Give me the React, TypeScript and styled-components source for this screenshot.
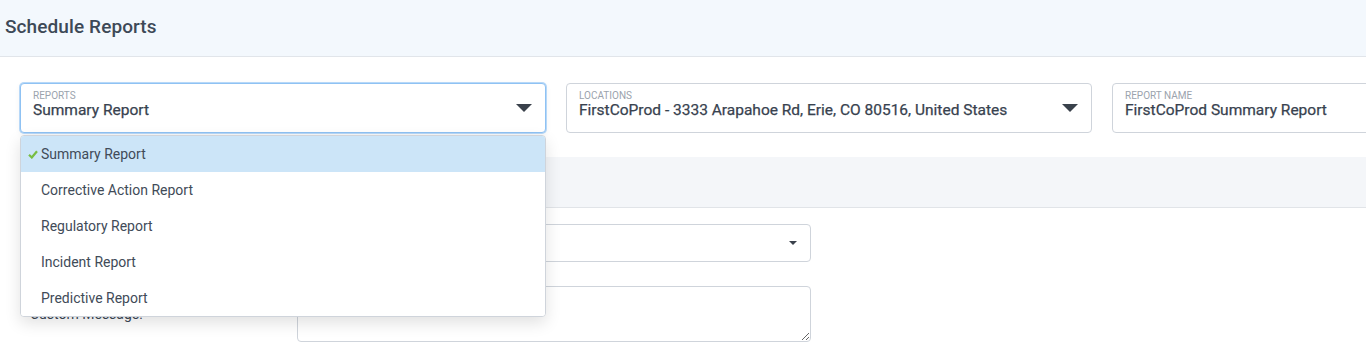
import React from "react";
import styled, { createGlobalStyle, css } from "styled-components";

const GlobalStyle = createGlobalStyle`
  html, body {
    margin: 0;
    padding: 0;
    background: #fff;
    font-family: Roboto, "Liberation Sans", sans-serif;
    color: #3b4756;
    overflow: hidden;
  }
`;

const Page = styled.div`
  width: 1366px;
  height: 354px;
  overflow: hidden;
  position: relative;
`;

const Header = styled.div`
  box-sizing: border-box;
  height: 57px;
  background: #f3f8fd;
  border-bottom: 1px solid #e1e5ea;
  display: flex;
  align-items: center;
  padding: 0 0 4px 5px;
`;

const Title = styled.h1`
  margin: 0;
  font-size: 19px;
  font-weight: 500;
  color: #3d4957;
  letter-spacing: 0.1px;
`;

const Body = styled.div`
  padding: 26px 0 0 20px;
`;

const FieldRow = styled.div`
  display: flex;
  gap: 20px;
  width: 1640px;
`;

const FieldWrap = styled.div`
  position: relative;
  width: 526px;
  flex-shrink: 0;
`;

const Field = styled.div<{ $focused?: boolean }>`
  box-sizing: border-box;
  height: 50px;
  border: 1px solid #cfd4db;
  border-radius: 4px;
  background: #fff;
  display: flex;
  align-items: center;
  justify-content: space-between;
  padding: 0 13px 7px 12px;
  ${(p) =>
    p.$focused &&
    css`
      border-color: #8fc2f3;
      box-shadow: 0 0 0 1px #b7d8f8, 0 2px 6px rgba(0, 0, 0, 0.06);
    `}
`;

const FieldText = styled.div`
  display: flex;
  flex-direction: column;
`;

const FieldLabel = styled.span`
  font-size: 10px;
  line-height: 11px;
  color: #9ba3ad;
  text-transform: uppercase;
`;

const FieldValue = styled.span`
  font-size: 15.5px;
  line-height: 19px;
  color: #38424f;
  font-weight: 400;
  -webkit-text-stroke: 0.25px #38424f;
`;

const Caret = styled.span<{ $small?: boolean }>`
  width: 0;
  height: 0;
  margin-top: ${(p) => (p.$small ? 0 : 7)}px;
  border-left: ${(p) => (p.$small ? 4 : 8)}px solid transparent;
  border-right: ${(p) => (p.$small ? 4 : 8)}px solid transparent;
  border-top: ${(p) => (p.$small ? 4 : 8)}px solid #3a414b;
`;

const Menu = styled.ul`
  position: absolute;
  top: 52px;
  left: 0;
  width: 526px;
  box-sizing: border-box;
  margin: 0;
  padding: 0;
  list-style: none;
  background: #fff;
  border: 1px solid #cfd4db;
  border-radius: 4px;
  box-shadow: 0 6px 16px rgba(0, 0, 0, 0.12);
  z-index: 10;
  overflow: hidden;
`;

const MenuItem = styled.li<{ $selected?: boolean }>`
  height: 36px;
  display: flex;
  align-items: center;
  padding-left: 20px;
  font-size: 14px;
  color: #414b58;
  position: relative;
  background: ${(p) => (p.$selected ? "#cce5f8" : "#fff")};
`;

const Check = styled.svg`
  position: absolute;
  left: 7px;
  top: 14px;
`;

const Band = styled.div`
  margin-top: 24px;
  height: 50px;
  background: #f4f6f9;
  border-bottom: 1px solid #e1e4e8;
`;

const Form = styled.div`
  padding: 16px 0 0 10px;
  display: flex;
  flex-direction: column;
  gap: 24px;
`;

const FormRow = styled.div`
  display: flex;
  align-items: center;
`;

const FormLabel = styled.label`
  width: 267px;
  font-size: 14px;
  color: #3b4756;
`;

const Select = styled.div`
  box-sizing: border-box;
  width: 514px;
  height: 38px;
  border: 1px solid #cfd4db;
  border-radius: 4px;
  display: flex;
  align-items: center;
  justify-content: flex-end;
  padding-right: 13px;
`;

const TextArea = styled.textarea`
  box-sizing: border-box;
  width: 514px;
  height: 56px;
  border: 1px solid #cfd4db;
  border-radius: 4px;
  resize: vertical;
  font-family: inherit;
  display: block;
`;

const reports = [
  "Summary Report",
  "Corrective Action Report",
  "Regulatory Report",
  "Incident Report",
  "Predictive Report",
];

export default function App() {
  return (
    <Page>
      <GlobalStyle />
      <Header>
        <Title>Schedule Reports</Title>
      </Header>
      <Body>
        <FieldRow>
          <FieldWrap>
            <Field $focused>
              <FieldText>
                <FieldLabel>Reports</FieldLabel>
                <FieldValue>Summary Report</FieldValue>
              </FieldText>
              <Caret />
            </Field>
            <Menu>
              {reports.map((r, i) => (
                <MenuItem key={r} $selected={i === 0}>
                  {i === 0 && (
                    <Check width="10" height="9" viewBox="0 0 10 9">
                      <path d="M1 4.8 L3.8 7.5 L9 1.2" fill="none" stroke="#78bd43" strokeWidth="2.2" />
                    </Check>
                  )}
                  {r}
                </MenuItem>
              ))}
            </Menu>
          </FieldWrap>
          <FieldWrap>
            <Field>
              <FieldText>
                <FieldLabel>Locations</FieldLabel>
                <FieldValue>FirstCoProd - 3333 Arapahoe Rd, Erie, CO 80516, United States</FieldValue>
              </FieldText>
              <Caret />
            </Field>
          </FieldWrap>
          <FieldWrap>
            <Field>
              <FieldText>
                <FieldLabel>Report Name</FieldLabel>
                <FieldValue>FirstCoProd Summary Report</FieldValue>
              </FieldText>
            </Field>
          </FieldWrap>
        </FieldRow>
        <Band />
        <Form>
          <FormRow>
            <FormLabel>Frequency:</FormLabel>
            <Select>
              <Caret $small />
            </Select>
          </FormRow>
          <FormRow>
            <FormLabel>Custom Message:</FormLabel>
            <TextArea />
          </FormRow>
        </Form>
      </Body>
    </Page>
  );
}
